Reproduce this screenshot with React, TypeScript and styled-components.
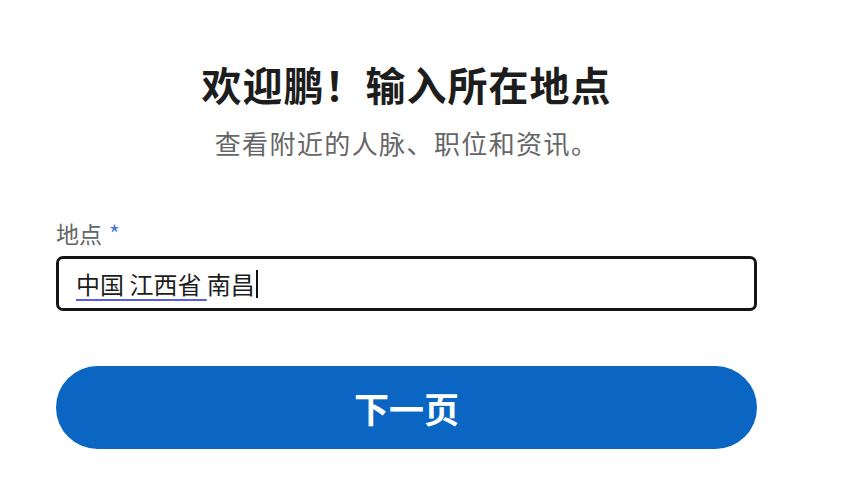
import styled, { createGlobalStyle } from "styled-components";

const GlobalStyle = createGlobalStyle`
  body {
    margin: 0;
    background: #ffffff;
    font-family: "Noto Sans CJK SC", "Noto Sans", sans-serif;
  }
`;

const Page = styled.div`
  width: 701px;
  margin-left: 56px;
  padding-top: 58px;
  display: flex;
  flex-direction: column;
`;

const Title = styled.h1`
  margin: 0;
  text-align: center;
  font-size: 40px;
  line-height: 52px;
  font-weight: 700;
  color: #1d1d1d;
  letter-spacing: 1px;
`;

const Subtitle = styled.p`
  margin: 16px 0 0;
  text-align: center;
  font-size: 26px;
  line-height: 34px;
  color: #666666;
  letter-spacing: 1.4px;
`;

const Field = styled.div`
  margin-top: 58px;
  display: flex;
  flex-direction: column;
  gap: 8px;
`;

const Label = styled.label`
  font-size: 23px;
  line-height: 30px;
  color: #666666;
`;

const Required = styled.span`
  color: #4a78d0;
  margin-left: 7px;
`;

const InputBox = styled.div`
  height: 55px;
  box-sizing: border-box;
  border: 3px solid #141414;
  border-radius: 7px;
  display: flex;
  align-items: center;
  padding: 0 17px;
  font-size: 24px;
  color: #1d1d1d;
`;

const InputText = styled.span`
  white-space: pre;
`;

const Composing = styled.span`
  text-decoration: underline;
  text-decoration-color: #5a5ee0;
  text-decoration-thickness: 2px;
  text-underline-offset: 5px;
`;

const Caret = styled.span`
  display: inline-block;
  width: 2px;
  height: 28px;
  background: #111;
  margin-left: 1px;
`;

const NextButton = styled.button`
  margin-top: 55px;
  height: 83px;
  border: none;
  border-radius: 42px;
  background: #0a66c2;
  color: #ffffff;
  font-family: inherit;
  font-size: 35px;
  font-weight: 700;
  cursor: pointer;
`;

export default function App() {
  return (
    <>
      <GlobalStyle />
      <Page>
        <Title>欢迎鹏！输入所在地点</Title>
        <Subtitle>查看附近的人脉、职位和资讯。</Subtitle>
        <Field>
          <Label>
            地点<Required>*</Required>
          </Label>
          <InputBox>
            <InputText>
              <Composing>中国 江西省 </Composing>南昌
            </InputText>
            <Caret />
          </InputBox>
        </Field>
        <NextButton>下一页</NextButton>
      </Page>
    </>
  );
}
